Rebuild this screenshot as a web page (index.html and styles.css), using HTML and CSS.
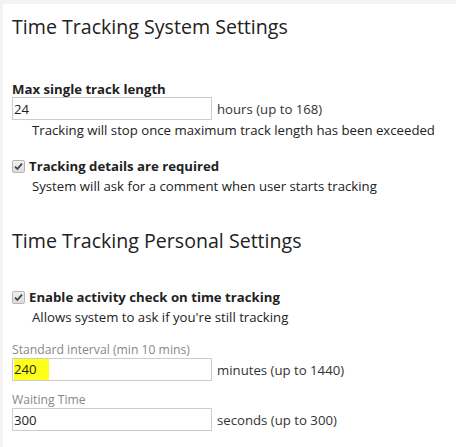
FILE: index.html
```html
<!DOCTYPE html>
<html lang="en">
<head>
    <meta charset="UTF-8">
    <title>Time Tracking Settings</title>
    <link rel="stylesheet" href="styles.css">
</head>
<body>
    <div class="page">
        <h2 class="section-title">Time Tracking System Settings</h2>

        <div class="field">
            <label class="field-label">Max single track length</label>
            <div class="input-row">
                <input class="text-input" type="text" value="24">
                <span class="unit">hours (up to 168)</span>
            </div>
            <div class="hint">Tracking will stop once maximum track length has been exceeded</div>
        </div>

        <div class="field check-field">
            <label class="check-label">
                <span class="checkbox">
                    <svg width="9" height="9" viewBox="0 0 9 9"><path d="M1 4.6 L3.4 7 L8 1.6" fill="none" stroke="#444" stroke-width="1.8"/></svg>
                </span>
                Tracking details are required
            </label>
            <div class="hint">System will ask for a comment when user starts tracking</div>
        </div>

        <h2 class="section-title second">Time Tracking Personal Settings</h2>

        <div class="field check-field personal">
            <label class="check-label">
                <span class="checkbox">
                    <svg width="9" height="9" viewBox="0 0 9 9"><path d="M1 4.6 L3.4 7 L8 1.6" fill="none" stroke="#444" stroke-width="1.8"/></svg>
                </span>
                Enable activity check on time tracking
            </label>
            <div class="hint">Allows system to ask if you're still tracking</div>
        </div>

        <div class="field small">
            <label class="muted-label">Standard interval (min 10 mins)</label>
            <div class="input-row">
                <div class="text-input"><mark class="hl">240</mark></div>
                <span class="unit">minutes (up to 1440)</span>
            </div>
        </div>

        <div class="field small wait">
            <label class="muted-label">Waiting Time</label>
            <div class="input-row">
                <input class="text-input" type="text" value="300">
                <span class="unit">seconds (up to 300)</span>
            </div>
        </div>
    </div>
</body>
</html>
```

FILE: styles.css
```css
body {
    margin: 0;
    background: #f3f3f3;
    font-family: "Open Sans", "Noto Sans", sans-serif;
    font-size: 13.2px;
    color: #222;
}
.page {
    margin: 4px 0 0 3px;
    padding: 10px 0 20px 9px;
    background: #fff;
    min-height: 423px;
}
.section-title {
    margin: 0;
    font-size: 19.6px;
    font-weight: normal;
    color: #222;
    line-height: 26px;
}
.section-title.second {
    margin-top: 32px;
}
.field {
    margin-top: 41px;
}
.field-label {
    display: block;
    font-weight: bold;
    line-height: 16px;
}
.input-row {
    display: flex;
    align-items: center;
    gap: 5px;
}
.text-input {
    box-sizing: border-box;
    width: 200px;
    height: 23px;
    margin: 0;
    padding: 0 1px;
    border: 1px solid #ccc;
    font: inherit;
    color: #222;
    line-height: 21px;
    background: #fff;
    outline: none;
}
.unit {
    color: #333;
}
.hint {
    padding-left: 20px;
    line-height: 19px;
    margin-top: 1px;
}
.check-field {
    margin-top: 16px;
}
.check-field.personal {
    margin-top: 33px;
}
.check-label {
    display: flex;
    align-items: center;
    gap: 4px;
    font-weight: bold;
    line-height: 20px;
}
.checkbox {
    box-sizing: border-box;
    display: flex;
    align-items: center;
    justify-content: center;
    width: 13px;
    height: 13px;
    border: 1px solid #b5b5b5;
    border-radius: 2px;
    background: linear-gradient(#f0f0f0, #dcdcdc);
}
.field.small {
    margin-top: 15px;
}
.field.small.wait {
    margin-top: 11px;
}
.muted-label {
    display: block;
    color: #888;
    font-size: 12.2px;
    line-height: 16px;
}
.hl {
    display: inline-block;
    background: #ffff1a;
    color: #222;
    line-height: 21px;
    padding: 0 12px 0 0;
}
```
